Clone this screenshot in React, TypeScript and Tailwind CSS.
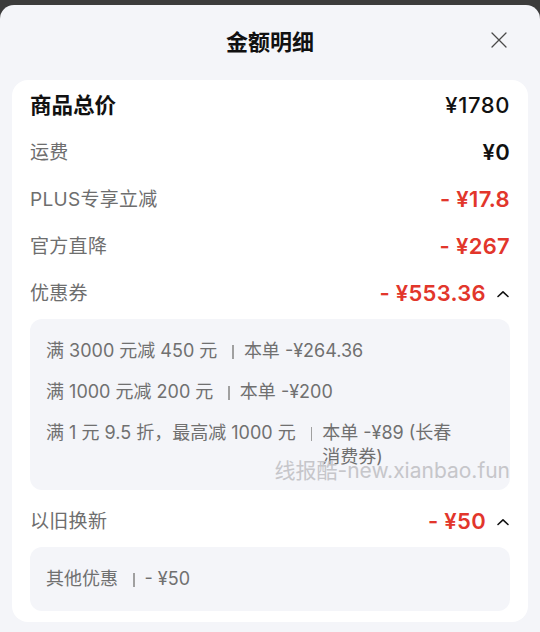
import React from 'react';

const font = { fontFamily: 'Inter, "Noto Sans CJK SC", sans-serif' };

function Chevron() {
    return (
        <svg width="14" height="8" viewBox="0 0 14 8" className="ml-[10px]">
            <path d="M2 6.5 L7 1.8 L12 6.5" fill="none" stroke="#111" strokeWidth="1.6" strokeLinecap="round" strokeLinejoin="round" />
        </svg>
    );
}

function Row({ label, value, red, arrow }: { label: string; value: string; red?: boolean; arrow?: boolean }) {
    return (
        <div className="flex h-[47px] items-center justify-between">
            <span className="mt-[2px] text-[19px] tracking-[0.3px] text-[#6e6e6e]">{label}</span>
            <span className="flex items-center">
                <span
                    className={
                        red
                            ? 'text-[22px] font-semibold tracking-[0.3px] text-[#e2362b]'
                            : 'text-[22px] font-semibold tracking-[0.3px] text-[#111]'
                    }
                >
                    {value}
                </span>
                {arrow && <Chevron />}
            </span>
        </div>
    );
}

function Line({ title, detail }: { title: string; detail: string }) {
    return (
        <div className="flex items-start text-[18px] leading-[24px] text-[#707070]">
            <span className="shrink-0">{title}</span>
            <span className="ml-[15px] mr-[10px] mt-[6px] h-[14px] w-[1.5px] shrink-0 bg-[#a0a0a0]" />
            <span>{detail}</span>
        </div>
    );
}

export default function App() {
    return (
        <div className="h-[632px] w-[540px] overflow-hidden bg-[#3c3c3c] pt-[5px]" style={font}>
            <div className="h-full rounded-t-[14px] bg-[#f4f5f9]">
                <div className="relative flex h-[75px] items-center justify-center">
                    <span className="text-[22px] font-bold text-[#111]">金额明细</span>
                    <svg width="16" height="16" viewBox="0 0 16 16" className="absolute right-[33px] top-[27px]">
                        <path d="M1 1 L15 15 M15 1 L1 15" stroke="#4a4a4a" strokeWidth="1.3" strokeLinecap="round" />
                    </svg>
                </div>

                <div className="mx-3 rounded-2xl bg-white px-[18px] pb-[11px] pt-[2px]">
                    <div className="flex h-[47px] items-center justify-between">
                        <span className="text-[21.5px] font-bold text-[#111]">商品总价</span>
                        <span className="text-[22px] font-medium tracking-[0.6px] text-[#111]">¥1780</span>
                    </div>
                    <Row label="运费" value="¥0" />
                    <Row label="PLUS专享立减" value="- ¥17.8" red />
                    <Row label="官方直降" value="- ¥267" red />
                    <Row label="优惠券" value="- ¥553.36" red arrow />

                    <div className="relative mt-[2px] flex flex-col gap-[17px] rounded-xl bg-[#f4f5f9] pb-[21px] pl-[16px] pr-[46px] pt-[20px]">
                        <Line title="满 3000 元减 450 元" detail="本单 -¥264.36" />
                        <Line title="满 1000 元减 200 元" detail="本单 -¥200" />
                        <Line title="满 1 元 9.5 折，最高减 1000 元" detail="本单 -¥89 (长春消费券)" />
                        <span className="absolute right-0 top-[140px] text-[21px] leading-[24px] text-[#c6c6ca]">
                            线报酷-new.xianbao.fun
                        </span>
                    </div>

                    <div className="mt-[8px]">
                        <Row label="以旧换新" value="- ¥50" red arrow />
                    </div>

                    <div className="mt-[2px] rounded-xl bg-[#f4f5f9] px-[16px] py-[20px]">
                        <Line title="其他优惠" detail="- ¥50" />
                    </div>
                </div>
            </div>
        </div>
    );
}
